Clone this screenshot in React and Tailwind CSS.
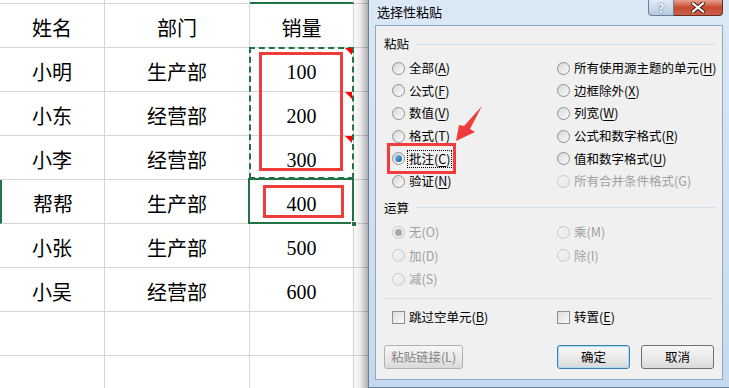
import React from "react";

const font = { fontFamily: '"Noto Sans CJK SC", "Noto Sans", sans-serif' };

const rows = [
  ["小明", "生产部", "100"],
  ["小东", "经营部", "200"],
  ["小李", "经营部", "300"],
  ["帮帮", "生产部", "400"],
  ["小张", "生产部", "500"],
  ["小吴", "经营部", "600"],
  ["", "", ""],
  ["", "", ""],
];

const Cell = ({ children, num, className = "" }) => (
  <div
    className={`h-[44px] border-r border-b border-[#d4d4d4] flex items-center justify-center pt-[4px] text-[20px] text-black ${className}`}
    style={{ fontFamily: num ? '"Liberation Serif", serif' : '"Noto Sans CJK SC", sans-serif', fontWeight: 400 }}
  >
    {children}
  </div>
);

const Sheet = () => (
  <div className="relative w-[368px] h-full bg-white overflow-hidden shrink-0">
    <div className="grid grid-cols-[105px_145px_104px_1fr]">
      <div className="h-[4px] border-r border-b border-[#d4d4d4]" />
      <div className="h-[4px] border-r border-b border-[#d4d4d4]" />
      <div className="h-[4px] border-r border-b-2 border-b-[#217346] border-r-[#d4d4d4]" />
      <div className="h-[4px] border-b border-[#d4d4d4]" />
      <Cell>姓名</Cell>
      <Cell>部门</Cell>
      <Cell>销量</Cell>
      <div className="h-[44px] border-b border-[#d4d4d4]" />
      {rows.map((r, i) => (
        <React.Fragment key={i}>
          <Cell className={i === 3 ? "border-l-2 border-l-[#217346]" : ""}>{r[0]}</Cell>
          <Cell>{r[1]}</Cell>
          <Cell num>{r[2]}</Cell>
          <div className="h-[44px] border-b border-[#d4d4d4]" />
        </React.Fragment>
      ))}
    </div>

    {/* copy marquee */}
    <div className="absolute left-[249px] top-[47px] w-[105px] h-[132px] border-2 border-dashed border-[#217346]" />
    {/* active cell */}
    <div className="absolute left-[248px] top-[178px] w-[106px] h-[46px] border-2 border-[#217346]" />
    <div className="absolute left-[351px] top-[221px] w-[6px] h-[6px] bg-[#217346] border border-white" />

    {/* comment markers */}
    {[48, 92, 136].map((t) => (
      <div
        key={t}
        className="absolute left-[345px] w-0 h-0 border-t-[7px] border-t-[#ff0000] border-l-[7px] border-l-transparent"
        style={{ top: t }}
      />
    ))}

    {/* red highlight boxes */}
    <div className="absolute left-[259px] top-[52px] w-[84px] h-[119px] border-[3px] border-[#f03c3c]" />
    <div className="absolute left-[263px] top-[185px] w-[81px] h-[33px] border-[3px] border-[#f03c3c]" />

    {/* dialog shadow */}
    <div className="absolute right-0 top-0 h-full w-[16px] bg-gradient-to-r from-transparent via-[#00000012] to-[#00000050]" />
  </div>
);

const Radio = ({ checked, disabled }) => (
  <span
    className={`w-[13px] h-[13px] rounded-full border flex items-center justify-center shrink-0 ${
      disabled ? "border-[#c8c8c8] bg-gradient-to-br from-[#f4f4f4] to-[#e8e8e8]" : "border-[#8e8f8f] bg-gradient-to-br from-[#d8d8d8] to-[#fbfbfb]"
    }`}
  >
    {checked && (
      <span
        className={`w-[7px] h-[7px] rounded-full ${
          disabled ? "bg-[#a8a8a8]" : "bg-gradient-to-br from-[#7ec3f0] to-[#0d5a9a]"
        }`}
      />
    )}
  </span>
);

const Label = ({ text, disabled, focus }) => {
  const i = text.lastIndexOf("(");
  const main = text.slice(0, i);
  const key = text.slice(i + 1, -1);
  return (
    <span
      className={`text-[12.5px] leading-[16px] whitespace-nowrap ${disabled ? "text-[#a0a0a0]" : "text-black"} ${
        focus ? "outline outline-1 outline-dotted outline-black px-[1px] -ml-[1px]" : ""
      }`}
    >
      {main}(
      {disabled ? key : <span className="underline underline-offset-2">{key}</span>})
    </span>
  );
};

const Opt = ({ text, checked, disabled, focus, className = "" }) => (
  <div className={`flex items-center gap-[4px] ${className}`}>
    <Radio checked={checked} disabled={disabled} />
    <Label text={text} disabled={disabled} focus={focus} />
  </div>
);

const Check = ({ text }) => (
  <div className="flex items-center gap-[4px]">
    <span className="w-[13px] h-[13px] border border-[#8e8f8f] bg-gradient-to-br from-[#dcdcdc] to-[#fbfbfb] shrink-0" />
    <Label text={text} />
  </div>
);

const GroupHead = ({ text, className = "" }) => (
  <div className={`flex items-center gap-[7px] pl-[8px] pr-[6px] ${className}`}>
    <span className="text-[12.5px] leading-[14px] text-black">{text}</span>
    <div className="flex-1 h-px bg-[#d5dfe5]" />
  </div>
);

const pasteLeft = [
  { t: "全部(A)" },
  { t: "公式(F)" },
  { t: "数值(V)" },
  { t: "格式(T)" },
  { t: "批注(C)", checked: true, focus: true },
  { t: "验证(N)" },
];
const pasteRight = [
  { t: "所有使用源主题的单元(H)" },
  { t: "边框除外(X)" },
  { t: "列宽(W)" },
  { t: "公式和数字格式(R)" },
  { t: "值和数字格式(U)" },
  { t: "所有合并条件格式(G)", disabled: true },
];

const Btn = ({ children, disabled, primary, className = "" }) => (
  <div
    className={`h-[24px] rounded-[3px] border flex items-center justify-center text-[12.5px] bg-gradient-to-b from-[#f6f6f6] via-[#ebebeb] to-[#d9d9d9] ${
      primary ? "border-[#3c7fb1] shadow-[inset_0_0_0_1px_#a9dcf6]" : disabled ? "border-[#adb2b5] text-[#838383]" : "border-[#707070] text-black"
    } ${className}`}
  >
    {children}
  </div>
);

const Dialog = () => (
  <div className="relative flex-1 h-full border-l border-b border-[#6b7f96] bg-gradient-to-b from-[#dbe8f5] to-[#c5d9ee] px-[6px] pb-[7px] flex flex-col" style={font}>
    <div className="h-[25px] shrink-0 flex items-start">
      <span className="text-[13px] leading-[16px] mt-[4px] ml-[2px] text-black">选择性粘贴</span>
      <div className="ml-auto flex">
        <div className="w-[26px] h-[16px] rounded-bl-[4px] border border-t-0 border-[#6c7f98] bg-gradient-to-b from-[#e2ebf5] to-[#b5c9e0] flex items-center justify-center text-[12px] leading-none font-bold text-white [text-shadow:0_0_2px_#37475d]">
          ?
        </div>
        <div className="w-[49px] h-[16px] rounded-br-[4px] border border-t-0 border-l-0 border-[#6a2b23] bg-gradient-to-b from-[#e6a090] via-[#c9482f] to-[#c7604a] flex items-center justify-center">
          <svg width="14" height="11" viewBox="0 0 14 11">
            <path d="M2 1.5 L12 9.5 M12 1.5 L2 9.5" stroke="#3a1710" strokeWidth="4" strokeLinecap="square" />
            <path d="M2 1.5 L12 9.5 M12 1.5 L2 9.5" stroke="#ffffff" strokeWidth="2.2" strokeLinecap="square" />
          </svg>
        </div>
      </div>
    </div>

    <div className="flex-1 border border-[#8ea7c4] bg-[#f0f0f0] flex flex-col">
      <GroupHead text="粘贴" className="h-[31px] pt-[5px]" />
      <div className="grid grid-cols-[165px_1fr] pl-[16px]">
        {pasteLeft.map((o, i) => (
          <React.Fragment key={i}>
            <Opt text={o.t} checked={o.checked} focus={o.focus} className="h-[22.6px]" />
            <Opt text={pasteRight[i].t} disabled={pasteRight[i].disabled} className="h-[22.6px]" />
          </React.Fragment>
        ))}
      </div>
      <GroupHead text="运算" className="h-[28px] pt-[2px]" />
      <div className="grid grid-cols-[165px_1fr] pl-[16px]">
        <Opt text="无(O)" checked disabled className="h-[23.5px]" />
        <Opt text="乘(M)" disabled className="h-[23.5px]" />
        <Opt text="加(D)" disabled className="h-[23.5px]" />
        <Opt text="除(I)" disabled className="h-[23.5px]" />
        <Opt text="减(S)" disabled className="h-[23.5px]" />
        <div />
      </div>
      <div className="mt-[7px] mx-[8px] h-px bg-[#d5dfe5]" />
      <div className="h-[36px] grid grid-cols-[165px_1fr] pl-[16px] items-center">
        <Check text="跳过空单元(B)" />
        <Check text="转置(E)" />
      </div>
      <div className="mt-[10px] flex pl-[8px] pr-[8px]">
        <Btn disabled className="w-[79px]">粘贴链接(L)</Btn>
        <Btn primary className="w-[73px] ml-auto">确定</Btn>
        <Btn className="w-[73px] ml-[11px]">取消</Btn>
      </div>
    </div>

    {/* highlight on 批注 option */}
    <div className="absolute left-[18px] top-[143px] w-[69px] h-[31px] border-[3px] border-[#f03c3c]" />
    <svg className="absolute left-[82px] top-[100px]" width="40" height="46" viewBox="0 0 40 46">
      <polygon points="31,6 19,29 24,32 5,41 8,25 13,26" fill="#f03c3c" />
    </svg>
  </div>
);

export default function App() {
  return (
    <div className="w-[729px] h-[388px] flex overflow-hidden bg-white">
      <Sheet />
      <Dialog />
    </div>
  );
}
